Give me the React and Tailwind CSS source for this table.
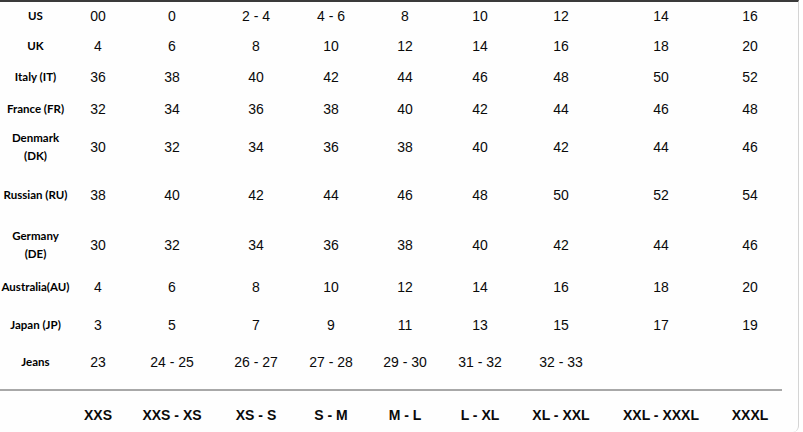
import React from "react";

const cols =
	"grid grid-cols-[74px_48px_100px_68px_82px_66px_84px_78px_122px_56px] items-center";

const rows = [
	{ label: ["US"], h: "h-[28px]", vals: ["00", "0", "2 - 4", "4 - 6", "8", "10", "12", "14", "16"] },
	{ label: ["UK"], h: "h-[31px]", vals: ["4", "6", "8", "10", "12", "14", "16", "18", "20"] },
	{ label: ["Italy (IT)"], h: "h-[32px]", vals: ["36", "38", "40", "42", "44", "46", "48", "50", "52"] },
	{ label: ["France (FR)"], h: "h-[31px]", vals: ["32", "34", "36", "38", "40", "42", "44", "46", "48"] },
	{ label: ["Denmark", "(DK)"], h: "h-[45px]", vals: ["30", "32", "34", "36", "38", "40", "42", "44", "46"] },
	{ label: ["Russian (RU)"], h: "h-[52px]", vals: ["38", "40", "42", "44", "46", "48", "50", "52", "54"] },
	{ label: ["Germany", "(DE)"], h: "h-[47px]", vals: ["30", "32", "34", "36", "38", "40", "42", "44", "46"] },
	{ label: ["Australia(AU)"], h: "h-[38px]", vals: ["4", "6", "8", "10", "12", "14", "16", "18", "20"] },
	{ label: ["Japan (JP)"], h: "h-[38px]", vals: ["3", "5", "7", "9", "11", "13", "15", "17", "19"] },
	{ label: ["Jeans"], h: "h-[36px]", vals: ["23", "24 - 25", "26 - 27", "27 - 28", "29 - 30", "31 - 32", "32 - 33", "", ""] },
];

const sizes = ["XXS", "XXS - XS", "XS - S", "S - M", "M - L", "L - XL", "XL - XXL", "XXL - XXXL", "XXXL"];

function App() {
	return (
		<div className="w-[803px] h-[432px] bg-white overflow-hidden">
			<div className="w-[799px] h-[432px] border-t-2 border-r border-t-[#3a3a3a] border-r-[#d4d4d4] rounded-br-[6px] bg-[#fefefe] text-[#0a0a0a]">
				{/* === Size rows === */}
				{rows.map((row) => (
					<div key={row.label.join(" ")} className={`${cols} ${row.h}`}>
						<div className="pr-[3px] text-center font-['Lato','Open_Sans',sans-serif] text-[11.5px] font-bold leading-[18px] whitespace-nowrap text-black">
							{row.label.map((l) => (
								<div key={l}>{l}</div>
							))}
						</div>
						{row.vals.map((v, i) => (
							<div
								key={i}
								className="text-center font-['Liberation_Sans',Arial,sans-serif] text-[14px] leading-none whitespace-nowrap"
							>
								{v}
							</div>
						))}
					</div>
				))}

				{/* === Divider === */}
				<div className="pt-[9px] pr-[16px]">
					<div className="h-[2px] bg-[#a8a8a8]" />
				</div>

				{/* === Size letters === */}
				<div className={`${cols} h-[48px]`}>
					<div />
					{sizes.map((s) => (
						<div
							key={s}
							className="text-center font-['Liberation_Sans',Arial,sans-serif] text-[14px] font-bold leading-none whitespace-nowrap"
						>
							{s}
						</div>
					))}
				</div>
			</div>
		</div>
	);
}

export default App;
